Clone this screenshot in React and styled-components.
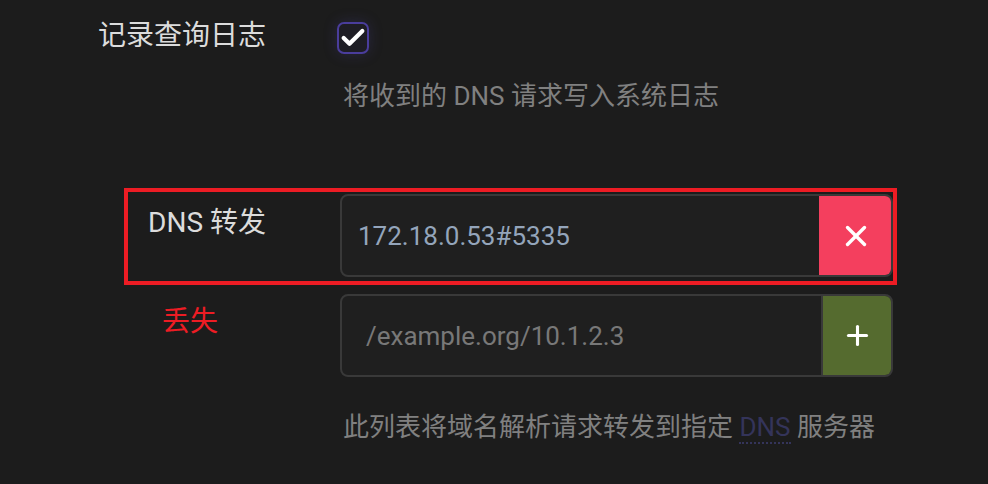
import React from "react";
import styled, { createGlobalStyle } from "styled-components";
import { Check, X, Plus } from "lucide-react";

const GlobalStyle = createGlobalStyle`
  html, body {
    margin: 0;
    padding: 0;
    background: #1c1c1c;
  }
  body {
    font-family: Roboto, "Noto Sans CJK SC", sans-serif;
  }
`;

const Page = styled.div`
  width: 988px;
  height: 484px;
  padding-top: 16px;
  box-sizing: border-box;
  overflow: hidden;
`;

const Field = styled.div`
  display: flex;
  align-items: flex-start;
`;

const Label = styled.div`
  width: ${({ $width }) => $width}px;
  margin-right: 74px;
  padding-top: ${({ $top }) => $top || 0}px;
  flex-shrink: 0;
  text-align: right;
  font-size: 28px;
  line-height: 40px;
  color: #dcdcdc;
`;

const Lost = styled.div`
  width: 340px;
  padding: 17px 0 0 162px;
  box-sizing: border-box;
  flex-shrink: 0;
  font-size: 28px;
  line-height: 40px;
  color: #ed1c24;
`;

const Control = styled.div`
  display: flex;
  flex-direction: column;
`;

const CheckBox = styled.div`
  width: 32px;
  height: 32px;
  margin: 6px 0 0 -3px;
  box-sizing: border-box;
  border: 2px solid #4a3d9c;
  border-radius: 7px;
  background: #1e1d24;
  box-shadow: 0 0 14px rgba(80, 70, 170, 0.25);
  display: flex;
  align-items: center;
  justify-content: center;
  color: #ffffff;
`;

const Help = styled.div`
  margin: ${({ $top }) => $top}px 0 0 ${({ $left }) => $left || 0}px;
  font-size: 26px;
  line-height: 36px;
  color: #808080;
  white-space: nowrap;
`;

const Abbr = styled.span`
  color: #34345a;
  border-bottom: 2px dotted #34345a;
`;

const Highlight = styled.div`
  width: 773px;
  margin: 74px 0 0 124px;
  padding: 2px 0 4px;
  box-sizing: border-box;
  border: 4px solid #ed1c24;
`;

const Group = styled.div`
  display: flex;
  width: 553px;
  height: 83px;
  box-sizing: border-box;
  border: 2px solid #393939;
  border-radius: 8px;
  background: #1f1f1f;
  overflow: hidden;
  margin-top: ${({ $top }) => $top || 0}px;
`;

const Input = styled.input`
  flex: 1;
  min-width: 0;
  border: none;
  outline: none;
  background: transparent;
  padding: 0 0 0 ${({ $pad }) => $pad}px;
  font-family: Roboto, "Noto Sans CJK SC", sans-serif;
  font-size: 26px;
  color: #94a5bb;

  &::placeholder {
    color: #787878;
  }
`;

const Button = styled.button`
  width: ${({ $danger }) => ($danger ? 74 : 70)}px;
  margin: ${({ $danger }) => ($danger ? "-2px -2px -2px 0" : "0")};
  border: none;
  border-left: ${({ $danger }) => ($danger ? "none" : "2px solid #393939")};
  background: ${({ $danger }) => ($danger ? "#f43f5e" : "#556b2f")};
  color: #ffffff;
  display: flex;
  align-items: center;
  justify-content: center;
  padding: 0;
  cursor: pointer;
`;

export default function App() {
  return (
    <>
      <GlobalStyle />
      <Page>
        <Field>
          <Label $width={266}>记录查询日志</Label>
          <Control>
            <CheckBox>
              <Check size={28} strokeWidth={3.6} />
            </CheckBox>
            <Help $top={24} $left={3}>
              将收到的 DNS 请求写入系统日志
            </Help>
          </Control>
        </Field>

        <Highlight>
          <Field>
            <Label $width={138} $top={9}>
              DNS 转发
            </Label>
            <Group>
              <Input $pad={16} defaultValue="172.18.0.53#5335" />
              <Button $danger>
                <X size={34} strokeWidth={2.4} />
              </Button>
            </Group>
          </Field>
        </Highlight>

        <Field>
          <Lost>丢失</Lost>
          <Group $top={9}>
            <Input $pad={24} placeholder="/example.org/10.1.2.3" />
            <Button>
              <Plus size={31} strokeWidth={2.4} />
            </Button>
          </Group>
        </Field>

        <Help $top={32} $left={343}>
          此列表将域名解析请求转发到指定 <Abbr>DNS</Abbr> 服务器
        </Help>
      </Page>
    </>
  );
}
